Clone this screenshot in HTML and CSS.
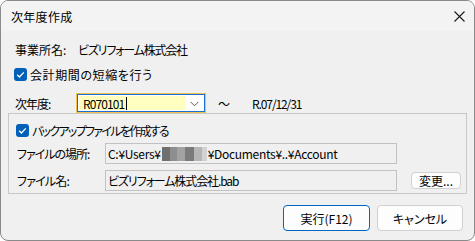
FILE: index.html
```html
<!DOCTYPE html>
<html lang="ja">
<head>
    <meta charset="UTF-8">
    <meta name="viewport" content="width=device-width, initial-scale=1.0">
    <title>次年度作成</title>
    <link rel="stylesheet" href="styles.css">
</head>
<body>
    <div class="window">
        <div class="titlebar">
            <span class="title">次年度作成</span>
            <svg class="close" width="11" height="11" viewBox="0 0 11 11">
                <path d="M0.5 0.5 L10.5 10.5 M10.5 0.5 L0.5 10.5" stroke="#1a1a1a" stroke-width="1.1" fill="none"/>
            </svg>
        </div>
        <div class="content">
            <div class="office-row">
                <span class="office-label">事業所名:</span>
                <span class="office-name">ビズリフォーム株式会社</span>
            </div>
            <label class="check check-shorten">
                <span class="box">
                    <svg width="13" height="13" viewBox="0 0 13 13"><path d="M3.2 6.8 L5.4 9 L9.8 4.4" stroke="#fff" stroke-width="1.3" fill="none"/></svg>
                </span>
                <span class="shorten-text">会計期間の短縮を行う</span>
            </label>
            <div class="year-row">
                <span class="year-label">次年度:</span>
                <div class="combo">
                    <span class="combo-text">R070101<span class="caret"></span></span>
                    <span class="combo-arrow">
                        <svg width="9" height="6" viewBox="0 0 9 6"><path d="M0.5 0.8 L4.5 4.8 L8.5 0.8" stroke="#5c5c5c" stroke-width="1" fill="none"/></svg>
                    </span>
                </div>
                <span class="tilde">〜</span>
                <span class="end-date">R.07/12/31</span>
            </div>
            <div class="group">
                <label class="check check-backup">
                    <span class="box">
                        <svg width="13" height="13" viewBox="0 0 13 13"><path d="M3.2 6.8 L5.4 9 L9.8 4.4" stroke="#fff" stroke-width="1.3" fill="none"/></svg>
                    </span>
                    <span class="backup-text">バックアップファイルを作成する</span>
                </label>
                <div class="field-row first">
                    <span class="field-label place-label">ファイルの場所:</span>
                    <div class="field path">C:¥Users¥<span class="mosaic"><i class="m1"></i><i class="m2"></i><i class="m3"></i><i class="m4"></i><i class="m5"></i><i class="m6"></i></span>¥Documents¥..¥Account</div>
                </div>
                <div class="field-row second">
                    <span class="field-label name-label">ファイル名:</span>
                    <div class="field file-name">ビズリフォーム株式会社.bab</div>
                    <button class="btn btn-small">変更...</button>
                </div>
            </div>
            <div class="actions">
                <button class="btn btn-main btn-default">実行(F12)</button>
                <button class="btn btn-main">キャンセル</button>
            </div>
        </div>
    </div>
</body>
</html>
```

FILE: styles.css
```css
* { box-sizing: border-box; }
body { margin: 0; background: #fff; font-family: "Noto Sans CJK JP", "Noto Sans", sans-serif; font-size: 12px; color: #000; font-feature-settings: "palt"; }
.window { width: 475px; height: 241px; border: 1px solid #8a8a8a; border-radius: 8px; overflow: hidden; background: #f0f0f0; }
.titlebar { height: 30px; background: #f3f3f3; display: flex; align-items: center; justify-content: space-between; padding: 0 9px 0 10px; }
.title { font-size: 12px; letter-spacing: 0.3px; }
.close { display: block; }
.content { padding: 0 11px 0 7px; }
.office-row { margin-top: 9px; height: 20px; line-height: 20px; padding-left: 7px; display: flex; }
.office-label { width: 63px; }
.office-name { letter-spacing: -1.2px; }
.check { display: flex; align-items: center; height: 20px; gap: 3px; }
.check-shorten { padding-left: 6px; margin-top: 4px; }
.shorten-text { letter-spacing: 0.6px; }
.box { width: 13px; height: 13px; background: #005fb8; border-radius: 3px; display: block; }
.box svg { display: block; }
.year-row { margin-top: 9px; height: 20px; display: flex; align-items: center; padding-left: 7px; }
.year-label { width: 61px; letter-spacing: -1px; }
.combo { width: 130px; height: 20px; border: 1px solid #f0c24a; box-shadow: inset 0 0 0 1px #1a6fd0; background: #fff; display: flex; padding: 2px; }
.combo-text { width: 107px; background: #ffffc0; display: flex; align-items: center; padding-left: 4px; letter-spacing: -0.9px; }
.caret { width: 1px; height: 13px; background: #000; margin-left: 2px; }
.combo-arrow { flex: 1; display: flex; align-items: center; justify-content: center; padding-top: 1px; }
.tilde { margin-left: 12px; width: 12px; }
.end-date { margin-left: 22px; letter-spacing: -1.1px; }
.group { width: 459px; height: 81px; border: 1px solid #c8c8c8; padding-top: 6px; }
.check-backup { padding-left: 7px; }
.backup-text { letter-spacing: -1.7px; }
.field-row { display: flex; align-items: center; padding-left: 8px; }
.field-row.first { margin-top: 3px; }
.field-row.second { margin-top: 6px; }
.field-label { width: 88px; }
.place-label { letter-spacing: -1px; }
.name-label { letter-spacing: -0.8px; }
.field { width: 292px; height: 21px; border: 1px solid #c2c2c2; background: #f0f0f0; display: flex; align-items: center; padding-left: 2px; white-space: nowrap; overflow: hidden; }
.path { letter-spacing: -0.3px; }
.file-name { letter-spacing: -1.1px; }
.mosaic { display: inline-flex; height: 14px; margin: 0 1px; }
.mosaic i { display: block; height: 14px; }
.m1 { width: 8px; background: #6f6f6f; }
.m2 { width: 7px; background: #8e8e8e; }
.m3 { width: 8px; background: #a2a2a2; }
.m4 { width: 9px; background: #7b7b7b; }
.m5 { width: 8px; background: #b6b6b6; }
.m6 { width: 5px; background: #d2d2d2; }
.btn { font-family: inherit; font-size: 12px; font-feature-settings: "palt"; color: #000; background: #fdfdfd; border: 1px solid #d0d0d0; border-radius: 4px; padding: 0; cursor: pointer; }
.btn-small { width: 50px; height: 17px; margin-left: 14px; line-height: 14px; }
.actions { display: flex; justify-content: flex-end; gap: 7px; margin-top: 11px; }
.btn-main { height: 26px; width: 86px; }
.btn-default { width: 87px; border: 1px solid #0067c0; }
```
